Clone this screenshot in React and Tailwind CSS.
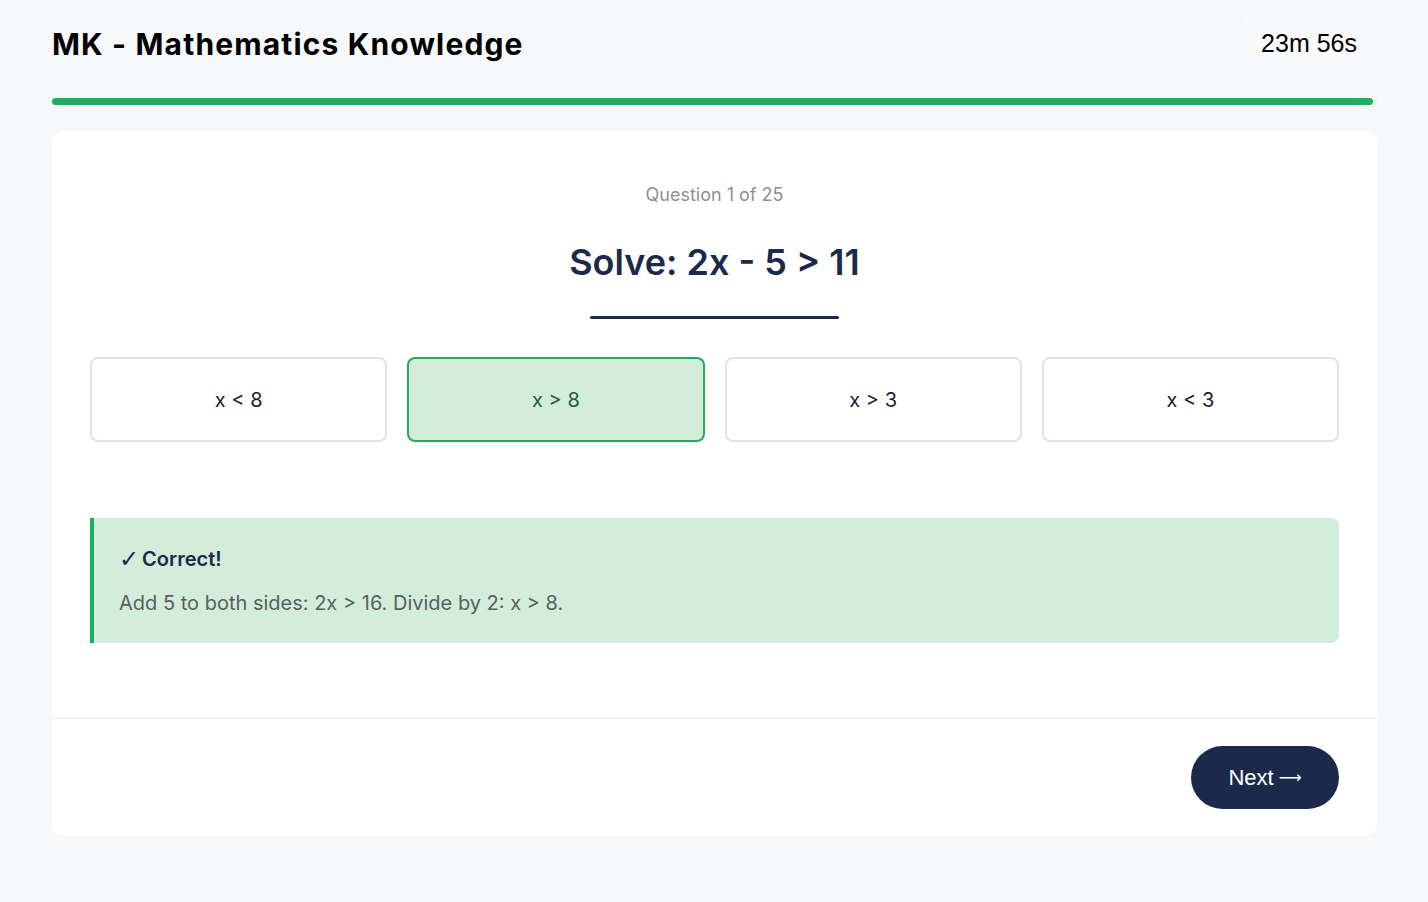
const options = [
  { label: 'x < 8', correct: false },
  { label: 'x > 8', correct: true },
  { label: 'x > 3', correct: false },
  { label: 'x < 3', correct: false },
];

export default function App() {
  return (
    <div className="min-h-[902px] bg-[#f7f8fa] pl-[52px] pr-[51px] pb-[66px] font-['Inter',sans-serif]">
      {/* Header */}
      <header className="flex h-[88px] items-center justify-between">
        <h1 className="text-[30px] font-bold tracking-[1.15px] text-black font-['Inter',sans-serif]">
          MK - Mathematics Knowledge
        </h1>
        <div className="flex h-[54px] items-center rounded-md bg-[#f9fafb] px-[20px] text-[25px] text-black font-['Liberation_Sans',sans-serif]">
          23m 56s
        </div>
      </header>

      {/* Progress */}
      <div className="mt-[10px] h-[7px] w-full rounded-full bg-[#eef0f2]">
        <div className="h-full w-[99.7%] rounded-full bg-[#1fae62]" />
      </div>

      {/* Card */}
      <main className="mt-[26px] rounded-xl bg-white">
        <div className="px-[38px] pb-[75px] pt-[50px]">
          <p className="text-center text-[18px] text-[#8b8f94]">Question 1 of 25</p>
          <h2 className="mt-[27px] text-center text-[36px] font-semibold text-[#1b2a4a]">
            Solve: 2x - 5 &gt; 11
          </h2>
          <div className="mx-auto mt-[27px] h-[3px] w-[249px] rounded-full bg-[#1b2a4a]" />

          <div className="mt-[38px] grid grid-cols-4 gap-[20px]">
            {options.map((o) => (
              <button
                key={o.label}
                className={`flex h-[85px] items-center justify-center rounded-lg border-2 pt-[1px] text-[20px] ${
                  o.correct
                    ? 'border-[#27a85f] bg-[#d3eddb] text-[#1d5e34]'
                    : 'border-[#e2e3e5] bg-white text-[#1b2030]'
                }`}
              >
                {o.label}
              </button>
            ))}
          </div>

          <div className="mt-[76px] flex flex-col rounded-r-lg border-l-4 border-[#1fae62] bg-[#d3eddb] px-[25px] pb-[25px] pt-[27px]">
            <p className="flex h-[28px] items-center text-[20px] font-semibold text-[#1b2a4a]">
              <span className="mr-[3px] font-['DejaVu_Sans',sans-serif] text-[24px] font-bold leading-none">✓</span>
              Correct!
            </p>
            <p className="mt-[15px] text-[20px] text-[#5a5e63]">
              Add 5 to both sides: 2x &gt; 16. Divide by 2: x &gt; 8.
            </p>
          </div>
        </div>

        <div className="flex justify-end border-t border-[#e5e6e8] px-[38px] pb-[27px] pt-[27px]">
          <button className="flex h-[63px] w-[148px] items-center justify-center rounded-full bg-[#1b2a4a] text-[22px] text-white font-['Liberation_Sans',sans-serif]">
            Next<span className="ml-[5px] font-['DejaVu_Sans',sans-serif] text-[16px]">⟶</span>
          </button>
        </div>
      </main>
    </div>
  );
}
